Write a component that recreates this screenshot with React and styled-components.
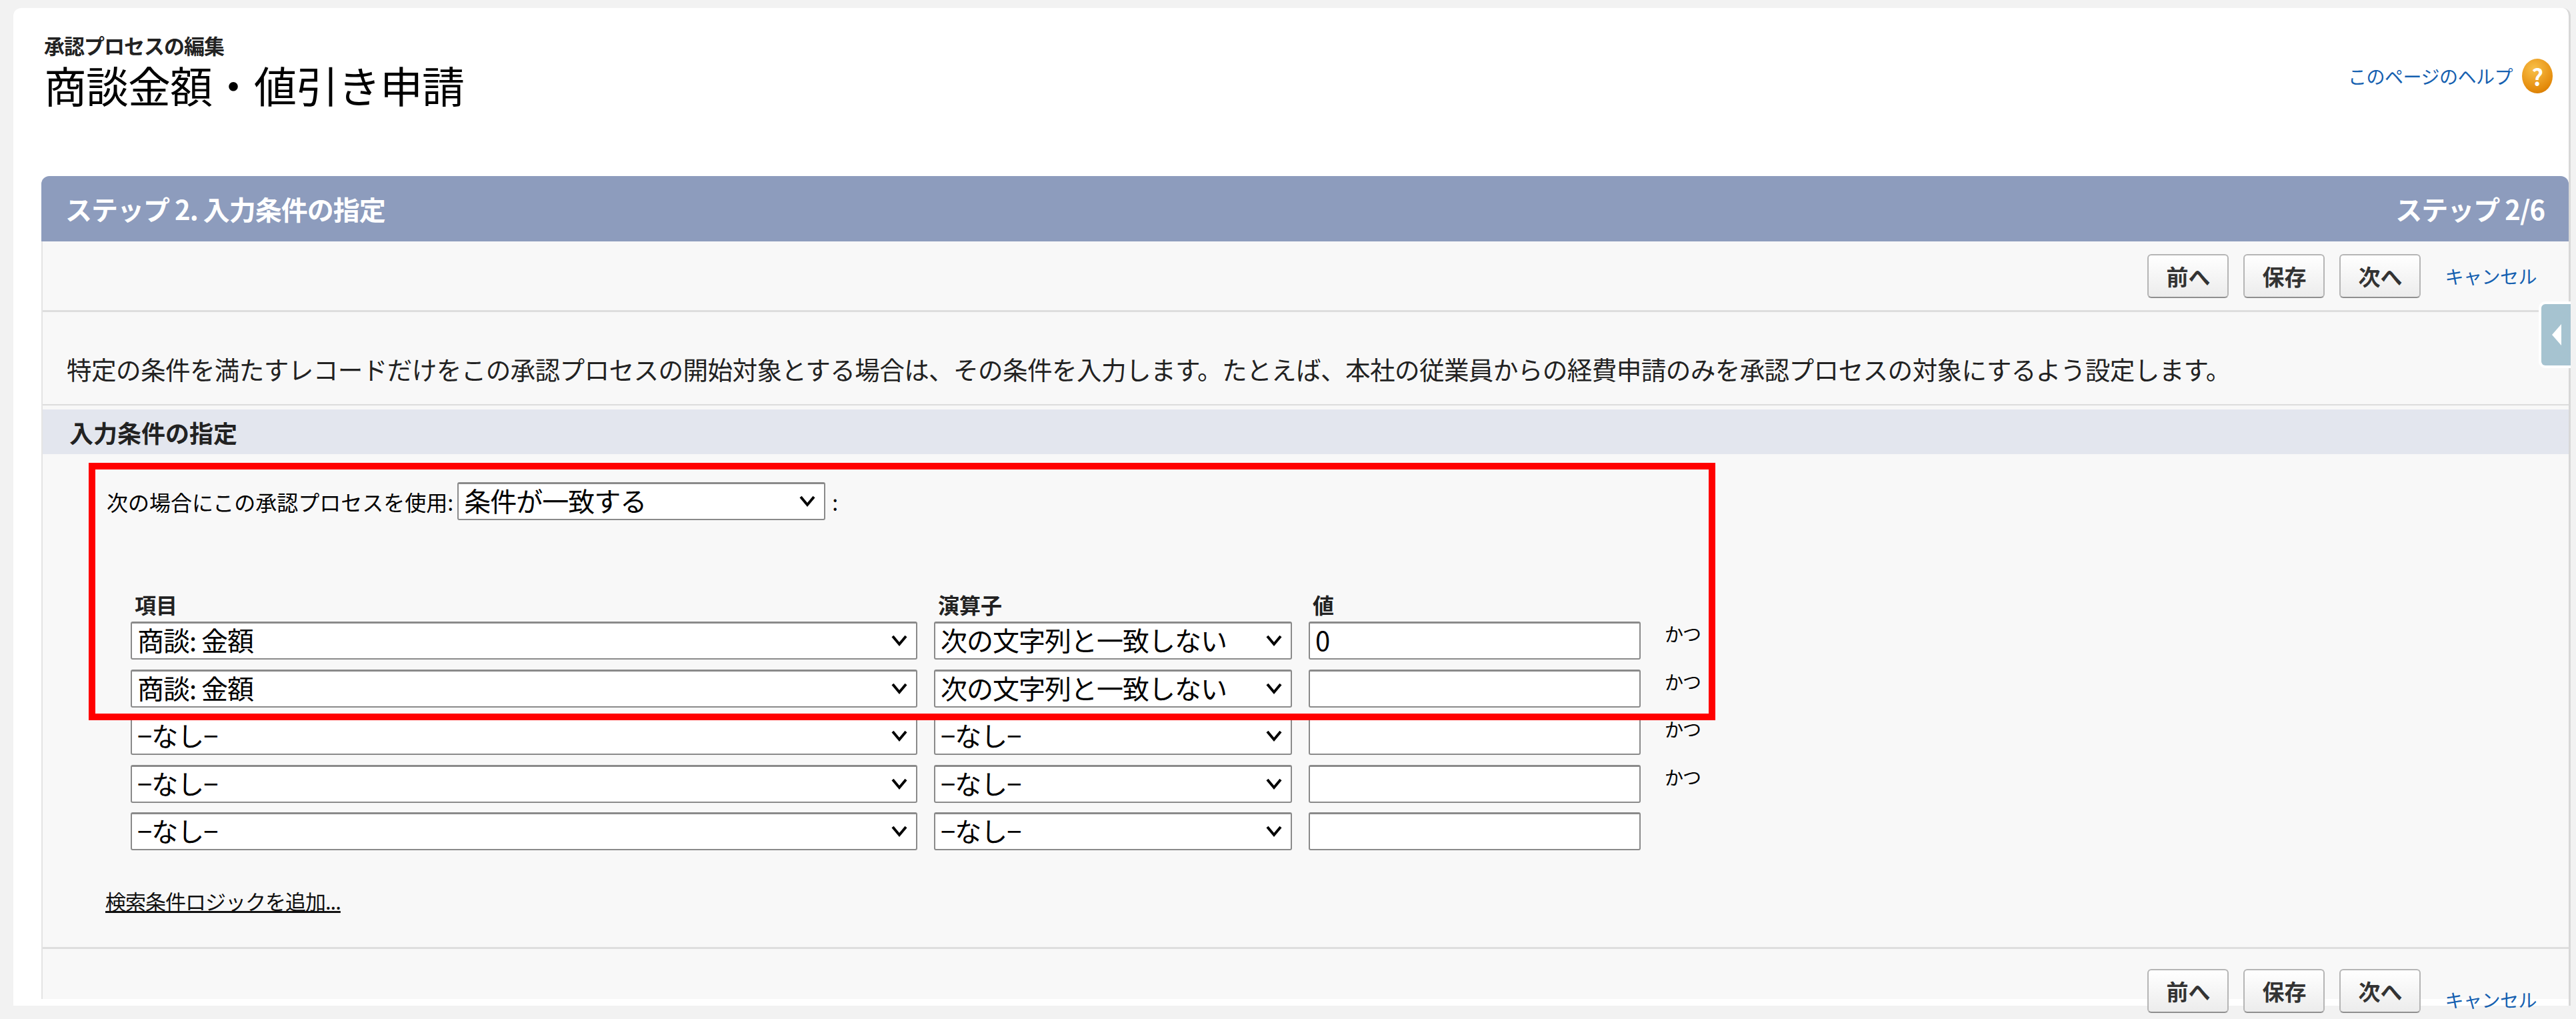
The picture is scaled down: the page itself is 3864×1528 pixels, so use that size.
import React from "react";
import styled, { createGlobalStyle } from "styled-components";

const Global = createGlobalStyle`
  html, body { margin: 0; padding: 0; background: #f2f2f2; }
  body { font-family: "Noto Sans CJK JP", "Noto Sans", sans-serif; color: #000; }
`;

const Page = styled.div`
  width: 3864px; height: 1528px; overflow: hidden; position: relative;
  padding: 12px 8px 0 20px; box-sizing: border-box;
`;
const Card = styled.div`
  background: #fff; border-radius: 12px 12px 0 0; padding: 0 0 0 42px; height: 1496px;
  box-sizing: border-box; position: relative; border-right: 3px solid #d8d8d8;
`;
const Header = styled.div`
  height: 252px; display: flex; justify-content: space-between; align-items: flex-start;
  padding: 36px 24px 0 4px; box-sizing: border-box;
`;
const Sub = styled.div` font-size: 31px; line-height: 40px; font-weight: 700; color: #222; letter-spacing: -1px;`;
const Title = styled.h1` margin: 0; font-size: 64px; line-height: 76px; font-weight: 400; letter-spacing: -1px;`;
const Help = styled.a`
  display: flex; align-items: center; gap: 14px; margin-top: 40px; color: #1560b0; font-size: 28px;
  text-decoration: none; letter-spacing: -0.5px;
`;
const HelpIcon = styled.span`
  width: 46px; height: 52px; border-radius: 50%; color: #fff; font-weight: 700; font-size: 34px;
  display: flex; align-items: center; justify-content: center;
  background: radial-gradient(circle at 40% 30%, #f8c04a, #e48a0a 70%, #c86e00);
`;
const Bar = styled.div`
  height: 98px; background: #8d9cbd; border-radius: 12px 12px 0 0; color: #fff;
  display: flex; justify-content: space-between; align-items: center; padding: 0 36px 0 36px;
  font-size: 40px; font-weight: 700; letter-spacing: -1px;
`;
const Body = styled.div` background: #f8f8f8; border-left: 2px solid #e4e4e4; height: 1136px;`;
const BtnRow = styled.div`
  height: ${p => p.h || 106}px; box-sizing: border-box; border-bottom: ${p => (p.last ? "none" : "3px solid #dedede")};
  display: flex; justify-content: flex-end; align-items: ${p => (p.last ? "flex-end" : "center")};
  gap: 22px; padding: 0 48px 0 0;
`;
const Btn = styled.button`
  height: 66px; padding: 0 26px; border: 2px solid #b5b5b5; border-bottom-color: #8f8f8f; border-radius: 6px;
  background: linear-gradient(#ffffff, #ececec); color: #333; font-weight: 700; font-size: 33px;
  font-family: inherit;
`;
const Cancel = styled.a` color: #1560b0; font-size: 28px; margin-left: 14px; letter-spacing: -0.5px;`;
const Desc = styled.div`
  height: 140px; box-sizing: border-box; padding: 62px 0 0 36px; font-size: 37.6px; line-height: 46px; color: #222;
  letter-spacing: -0.6px; white-space: nowrap; border-bottom: 2px solid #dcdcdc;
`;
const Section = styled.div`
  margin-top: 6px; height: 67px; background: #e3e6ee; display: flex; align-items: center; padding-left: 40px;
  font-size: 36px; font-weight: 700; color: #222;
`;
const Form = styled.div` padding: 42px 0 0 96px; position: relative; height: 742px; box-sizing: border-box; border-bottom: 3px solid #dedede;`;
const UseRow = styled.div` display: flex; align-items: center; gap: 6px; font-size: 32px; letter-spacing: 0;`;
const Wrap = styled.div`
  position: relative; width: ${p => p.w}px; height: 57px; margin-right: ${p => p.mr || 0}px;
`;
const Sel = styled.div`
  width: 100%; height: 100%; box-sizing: border-box; background: #fff; border: 2px solid #8a8a8a; border-top-width: 3px;
  border-radius: 3px; font-size: 40px; line-height: 48px; padding-left: 8px; white-space: nowrap; overflow: hidden;
  letter-spacing: -1px;
`;
const Chev = styled.svg` position: absolute; right: 14px; top: 16px; width: 26px; height: 24px;`;
const Input = styled.div`
  width: 498px; height: 57px; box-sizing: border-box; background: #fff; border: 2px solid #8a8a8a; border-top-width: 3px;
  border-radius: 3px; font-size: 40px; line-height: 48px; padding-left: 8px;
`;
const Grid = styled.div` margin-top: 108px; margin-left: 36px;`;
const Heads = styled.div` display: flex; font-size: 32px; line-height: 36px; font-weight: 700; height: 44px; color: #222;`;
const Head = styled.div` width: ${p => p.w}px; padding-left: ${p => p.pl || 0}px; box-sizing: border-box;`;
const Row = styled.div` display: flex; height: 71.5px; align-items: flex-start;`;
const And = styled.div` font-size: 28px; margin-left: 36px; margin-top: -2px; letter-spacing: -1px;`;
const Logic = styled.a`
  display: inline-block; margin-top: 38px; margin-left: -38px; font-size: 31px; color: #111; text-decoration: underline;
  letter-spacing: -1px;
`;
const RedBox = styled.div`
  position: absolute; left: 133px; top: 694px; width: 2440px; height: 386px; border: 10px solid #ff0000; box-sizing: border-box;
`;
const SideTab = styled.div`
  position: absolute; right: -3px; top: 440px; width: 44px; height: 92px; background: #a6c3d0;
  border: 4px solid #fff; border-right: none; border-radius: 10px 0 0 10px; display: flex; align-items: center; justify-content: center;
`;

const Chevron = () => (
  <Chev viewBox="0 0 26 24"><path d="M3 6 L13 18 L23 6" fill="none" stroke="#000" strokeWidth="4" /></Chev>
);
const Select = ({ w, mr, children }) => (
  <Wrap w={w} mr={mr}><Sel>{children}</Sel><Chevron /></Wrap>
);

const rows = [
  ["商談: 金額", "次の文字列と一致しない", "0", true],
  ["商談: 金額", "次の文字列と一致しない", "", true],
  ["−なし−", "−なし−", "", true],
  ["−なし−", "−なし−", "", true],
  ["−なし−", "−なし−", "", false],
];

const Buttons = () => (
  <>
    <Btn>前へ</Btn><Btn>保存</Btn><Btn>次へ</Btn><Cancel>キャンセル</Cancel>
  </>
);

export default function App() {
  return (
    <Page>
      <Global />
      <Card>
        <Header>
          <div>
            <Sub>承認プロセスの編集</Sub>
            <Title>商談金額・値引き申請</Title>
          </div>
          <Help>このページのヘルプ<HelpIcon>?</HelpIcon></Help>
        </Header>
        <Bar><span>ステップ 2. 入力条件の指定</span><span>ステップ 2/6</span></Bar>
        <Body>
          <BtnRow><Buttons /></BtnRow>
          <Desc>特定の条件を満たすレコードだけをこの承認プロセスの開始対象とする場合は、その条件を入力します。たとえば、本社の従業員からの経費申請のみを承認プロセスの対象にするよう設定します。</Desc>
          <Section>入力条件の指定</Section>
          <Form>
            <UseRow>次の場合にこの承認プロセスを使用:
              <Select w={552} mr={4}>条件が一致する</Select>:
            </UseRow>
            <Grid>
              <Heads>
                <Head w={1205} pl={6}>項目</Head>
                <Head w={562} pl={6}>演算子</Head>
                <Head w={400} pl={6}>値</Head>
              </Heads>
              {rows.map((r, i) => (
                <Row key={i}>
                  <Select w={1180} mr={25}>{r[0]}</Select>
                  <Select w={537} mr={25}>{r[1]}</Select>
                  <Input>{r[2]}</Input>
                  {r[3] && <And>かつ</And>}
                </Row>
              ))}
              <Logic>検索条件ロジックを追加...</Logic>
            </Grid>
          </Form>
          <BtnRow last h={96}><Buttons /></BtnRow>
        </Body>
        <SideTab>
          <svg width="20" height="40" viewBox="0 0 20 40"><path d="M18 4 L4 20 L18 36 Z" fill="#fff" /></svg>
        </SideTab>
      </Card>
      <RedBox />
    </Page>
  );
}
